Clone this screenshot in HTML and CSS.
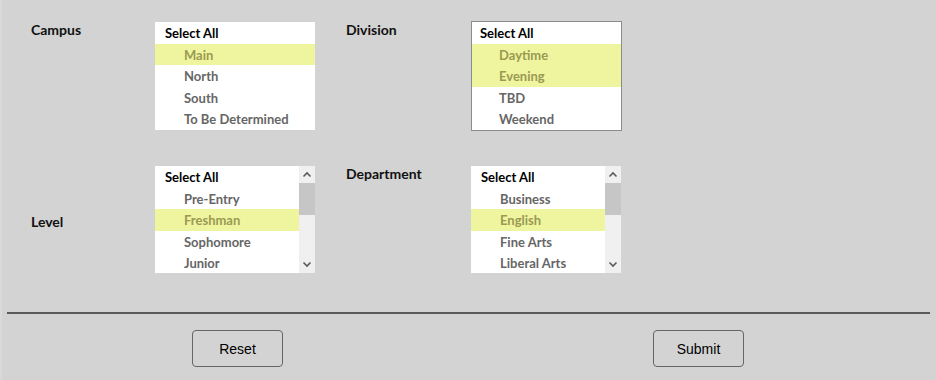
FILE: index.html
```html
<!DOCTYPE html>
<html lang="en">
<head>
    <meta charset="UTF-8">
    <meta name="viewport" content="width=device-width, initial-scale=1.0">
    <title>Filters</title>
    <link rel="stylesheet" href="styles.css">
</head>
<body>
    <div class="page">
        <div class="filters">
            <div class="filter">
                <div class="filter-label">Campus</div>
                <div class="listbox">
                    <div class="list">
                        <div class="opt all">Select All</div>
                        <div class="opt selected">Main</div>
                        <div class="opt">North</div>
                        <div class="opt">South</div>
                        <div class="opt">To Be Determined</div>
                    </div>
                </div>
            </div>
            <div class="filter">
                <div class="filter-label">Division</div>
                <div class="listbox bordered">
                    <div class="list">
                        <div class="opt all">Select All</div>
                        <div class="opt selected">Daytime</div>
                        <div class="opt selected">Evening</div>
                        <div class="opt">TBD</div>
                        <div class="opt">Weekend</div>
                    </div>
                </div>
            </div>
            <div class="filter">
                <div class="filter-label middle">Level</div>
                <div class="listbox scrolling">
                    <div class="list">
                        <div class="opt all">Select All</div>
                        <div class="opt">Pre-Entry</div>
                        <div class="opt selected">Freshman</div>
                        <div class="opt">Sophomore</div>
                        <div class="opt">Junior</div>
                    </div>
                    <div class="scrollbar">
                        <svg class="arrow" width="16" height="17" viewBox="0 0 16 17"><path d="M4.5 10.5 L8 7 L11.5 10.5" fill="none" stroke="#5a5a5a" stroke-width="1.6"/></svg>
                        <div class="track"><div class="thumb"></div></div>
                        <svg class="arrow" width="16" height="17" viewBox="0 0 16 17"><path d="M4.5 6.5 L8 10 L11.5 6.5" fill="none" stroke="#5a5a5a" stroke-width="1.6"/></svg>
                    </div>
                </div>
            </div>
            <div class="filter">
                <div class="filter-label">Department</div>
                <div class="listbox scrolling narrow">
                    <div class="list">
                        <div class="opt all">Select All</div>
                        <div class="opt">Business</div>
                        <div class="opt selected">English</div>
                        <div class="opt">Fine Arts</div>
                        <div class="opt">Liberal Arts</div>
                    </div>
                    <div class="scrollbar">
                        <svg class="arrow" width="16" height="17" viewBox="0 0 16 17"><path d="M4.5 10.5 L8 7 L11.5 10.5" fill="none" stroke="#5a5a5a" stroke-width="1.6"/></svg>
                        <div class="track"><div class="thumb"></div></div>
                        <svg class="arrow" width="16" height="17" viewBox="0 0 16 17"><path d="M4.5 6.5 L8 10 L11.5 6.5" fill="none" stroke="#5a5a5a" stroke-width="1.6"/></svg>
                    </div>
                </div>
            </div>
        </div>

        <hr class="divider">

        <div class="actions">
            <div class="action"><button type="reset" class="btn">Reset</button></div>
            <div class="action"><button type="submit" class="btn">Submit</button></div>
        </div>
    </div>
</body>
</html>
```

FILE: styles.css
```css
* {
    margin: 0;
    padding: 0;
    box-sizing: border-box;
}

body {
    background: #d3d3d3;
    font-family: 'Lato', 'Open Sans', sans-serif;
    width: 936px;
    height: 380px;
    overflow: hidden;
}

.page {
    border-left: 2px solid #d9d9d9;
    height: 100%;
    padding-top: 22px;
}

.filters {
    display: grid;
    grid-template-columns: 284px 276px;
    column-gap: 31px;
    row-gap: 35px;
    padding-left: 29px;
}

.filter {
    display: flex;
}

.filter-label {
    width: 124px;
    font-weight: 700;
    font-size: 14px;
    color: #111;
    margin-top: -1px;
}

.filter-label.middle {
    align-self: center;
    margin-top: 4px;
}

.listbox {
    display: flex;
    width: 160px;
    height: 108px;
    background: #fff;
}

.listbox.bordered {
    width: 151px;
    height: 110px;
    margin-top: -1px;
    margin-left: 1px;
    border: 1px solid #8c8c8c;
}

.listbox.scrolling {
    height: 107px;
}

.listbox.narrow {
    width: 150px;
    margin-left: 1px;
}

.list {
    flex: 1;
}

.opt {
    height: 21.6px;
    line-height: 22.6px;
    font-size: 13px;
    font-weight: 700;
    color: #666;
    padding-left: 29px;
    white-space: nowrap;
}

.opt.all {
    color: #000;
    padding-left: 10px;
}

.bordered .opt.all {
    padding-left: 8px;
}

.bordered .opt {
    padding-left: 27px;
}

.opt.selected {
    background: #eff49f;
    color: #9a9a52;
}

.scrollbar {
    width: 16px;
    background: #f0f0f0;
    display: flex;
    flex-direction: column;
}

.arrow {
    display: block;
    flex: none;
}

.track {
    flex: 1;
}

.thumb {
    height: 32px;
    background: #c6c6c6;
}

.divider {
    border: none;
    height: 2px;
    background: #5a5a5a;
    margin: 39px 6px 0 5px;
}

.actions {
    display: grid;
    grid-template-columns: 1fr 1fr;
    padding: 16px 7px 0 5px;
}

.action {
    display: flex;
    justify-content: center;
}

.btn {
    width: 91px;
    height: 37px;
    background: #d3d3d3;
    border: 1px solid #666;
    border-radius: 4px;
    font-family: 'Liberation Sans', Arial, sans-serif;
    font-size: 14px;
    color: #000;
}
```
